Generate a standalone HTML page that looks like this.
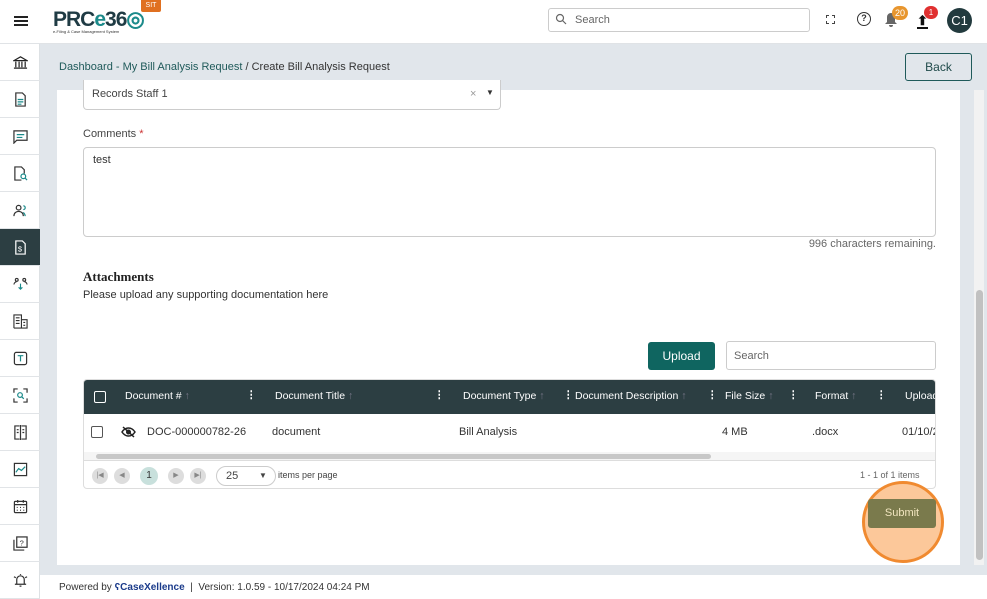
<!DOCTYPE html>
<html><head><style>
*{box-sizing:border-box;margin:0;padding:0}
body{width:987px;height:599px;overflow:hidden;font-family:"Liberation Sans",sans-serif;background:#e1e6eb;position:relative;color:#333}
.abs{position:absolute}
.top{left:0;top:0;width:987px;height:44px;background:#fff;border-bottom:1px solid #e0e3e6}
.side{left:0;top:44px;width:40px;height:555px;background:#fff;border-right:1px solid #dde1e4}
.si{position:absolute;left:0;width:40px;height:37px;border-bottom:1px solid #e1e4e7;display:flex;align-items:center;justify-content:center}
.si svg{width:15px;height:15px}
.card{left:57px;top:90px;width:903px;height:475px;background:#fff}
.cb{width:12px;height:12px;border:1px solid #555;border-radius:2px;display:inline-block}
.hcb{border-color:#fff}
.pg{width:16px;height:16px;border-radius:50%;background:#ddd;position:absolute;top:7px;font-size:7px;color:#888;text-align:center;line-height:16px}
</style></head><body>
<div class="abs top">
  <div class="abs" style="left:14px;top:16px;width:14px;height:2px;background:#222;box-shadow:0 4px 0 #222,0 8px 0 #222"></div>
  <div class="abs" style="left:53px;top:7px;font-size:21px;font-weight:bold;color:#1f3b44;letter-spacing:-1px">PRC<span style="color:#1b8a8a">e</span>36<span style="color:#1b8a8a">◎</span></div>
  <div class="abs" style="left:53px;top:29px;font-size:4px;color:#333">e-Filing &amp; Case Management System</div>
  <div class="abs" style="left:141px;top:0;width:20px;height:12px;background:#e07020;color:#fff;font-size:7px;text-align:center;line-height:12px;border-radius:0 0 2px 2px">SIT</div>
  <div class="abs" style="left:548px;top:8px;width:262px;height:24px;border:1px solid #ccc;border-radius:3px;font-size:11px;color:#666;padding:5px 0 0 26px">Search</div>
  <svg class="abs" style="left:555px;top:13px" width="12" height="12" viewBox="0 0 12 12" fill="none" stroke="#666" stroke-width="1.2"><circle cx="5" cy="5" r="3.5"/><path d="M7.5 7.5L11 11"/></svg>
  <div class="abs" style="left:826px;top:15px;width:9px;height:9px;border:1.5px dashed #444"></div>
  <div class="abs" style="left:857px;top:12px;width:14px;height:14px;border:1.5px solid #333;border-radius:50%;font-size:9px;text-align:center;line-height:11px;font-weight:bold">?</div>
  <svg class="abs" style="left:884px;top:12px" width="14" height="16" viewBox="0 0 14 16" fill="#666"><path d="M7 1a4 4 0 00-4 4v5L1 12h12l-2-2V5a4 4 0 00-4-4zM5 13h4a2 2 0 01-4 0z"/></svg>
  <div class="abs" style="left:892px;top:6px;width:16px;height:14px;background:#e8962e;border-radius:8px;color:#fff;font-size:9px;text-align:center;line-height:14px">20</div>
  <div class="abs" style="left:917px;top:13px;font-size:13px;font-weight:bold;color:#111">⬆</div>
  <div class="abs" style="left:917px;top:27px;width:11px;height:2px;background:#111"></div>
  <div class="abs" style="left:924px;top:6px;width:14px;height:13px;background:#e03030;border-radius:7px;color:#fff;font-size:8px;text-align:center;line-height:13px">1</div>
  <div class="abs" style="left:947px;top:8px;width:25px;height:25px;background:#223a3e;border-radius:50%;color:#fff;font-size:13px;text-align:center;line-height:25px">C1</div>
</div>
<div class="abs side">
  <div class="si" style="top:0"><svg viewBox="0 0 16 16" fill="none" stroke="#222" stroke-width="1.3"><path d="M1 6L8 2l7 4H1zM3 7v6M6.5 7v6M9.5 7v6M13 7v6M1 14h14"/></svg></div>
  <div class="si" style="top:37px"><svg viewBox="0 0 16 16" fill="none" stroke="#333" stroke-width="1.3"><path d="M3 1h7l3 3v11H3z"/><path d="M5 8h6M5 10.5h6M5 13h4" stroke="#1b8a8a"/></svg></div>
  <div class="si" style="top:74px"><svg viewBox="0 0 16 16" fill="none" stroke="#333" stroke-width="1.3"><path d="M1 2h14v10H4l-3 3z"/><path d="M4 6h8M4 9h6" stroke="#1b8a8a"/></svg></div>
  <div class="si" style="top:111px"><svg viewBox="0 0 16 16" fill="none" stroke="#333" stroke-width="1.3"><path d="M9 15H2V1h7l3 3v4"/><circle cx="11" cy="11" r="2.5" stroke="#1b8a8a"/><path d="M13 13l2 2" stroke="#1b8a8a"/></svg></div>
  <div class="si" style="top:148px"><svg viewBox="0 0 16 16" fill="none" stroke="#333" stroke-width="1.3"><circle cx="6" cy="5" r="2.5"/><path d="M1 14c0-3 2-5 5-5s5 2 5 5"/><path d="M11 3a2 2 0 010 4M13 14c0-2-1-3-2-4" stroke="#1b8a8a"/></svg></div>
  <div class="si" style="top:185px;background:#2c3e42"><svg viewBox="0 0 16 16" fill="none" stroke="#fff" stroke-width="1.3"><path d="M3 1h7l3 3v11H3z"/><text x="5.2" y="12.5" font-size="8" fill="#fff" stroke="none" font-family="Liberation Sans">$</text></svg></div>
  <div class="si" style="top:222px"><svg viewBox="0 0 16 16" fill="none" stroke="#333" stroke-width="1.2"><circle cx="4" cy="3" r="1.5"/><circle cx="12" cy="3" r="1.5"/><path d="M1 8c0-2 2-3 3-3M15 8c0-2-2-3-3-3"/><path d="M8 7v6M6 11l2 2 2-2" stroke="#1b8a8a"/></svg></div>
  <div class="si" style="top:259px"><svg viewBox="0 0 16 16" fill="none" stroke="#333" stroke-width="1.2"><path d="M1 15V1h8v14M9 6h6v9H1M3 4h4M3 7h4M3 10h4M11 9h2M11 12h2"/></svg></div>
  <div class="si" style="top:296px"><svg viewBox="0 0 16 16" fill="none" stroke="#333" stroke-width="1.3"><rect x="1.5" y="1.5" width="13" height="13" rx="2"/><path d="M5 5h6M8 5v6" stroke="#1b8a8a"/></svg></div>
  <div class="si" style="top:333px"><svg viewBox="0 0 16 16" fill="none" stroke="#333" stroke-width="1.3"><path d="M1 5V1h4M11 1h4v4M15 11v4h-4M5 15H1v-4"/><circle cx="7.5" cy="7.5" r="2.5" stroke="#1b8a8a"/><path d="M9.5 9.5l2 2" stroke="#1b8a8a"/></svg></div>
  <div class="si" style="top:370px"><svg viewBox="0 0 16 16" fill="none" stroke="#333" stroke-width="1.3"><path d="M7 1H2v14h5M9 1h5v14H9M8 0v16M4 5h2M4 8h2M10 5h2M10 8h2"/></svg></div>
  <div class="si" style="top:407px"><svg viewBox="0 0 16 16" fill="none" stroke="#333" stroke-width="1.3"><rect x="1.5" y="1.5" width="13" height="13"/><path d="M3 11l3-4 3 2 4-4" stroke="#1b8a8a"/></svg></div>
  <div class="si" style="top:444px"><svg viewBox="0 0 16 16" fill="none" stroke="#333" stroke-width="1.3"><rect x="1.5" y="2.5" width="13" height="12" rx="1"/><path d="M1.5 6h13M5 1v3M11 1v3M4 9h1M7.5 9h1M11 9h1M4 12h1M7.5 12h1M11 12h1"/></svg></div>
  <div class="si" style="top:481px"><svg viewBox="0 0 16 16" fill="none" stroke="#333" stroke-width="1.3"><rect x="4" y="1" width="11" height="11"/><path d="M1 4v11h11"/><text x="7" y="10" font-size="8" fill="#333" stroke="none" font-family="Liberation Sans">?</text></svg></div>
  <div class="si" style="top:518px"><svg viewBox="0 0 16 16" fill="none" stroke="#333" stroke-width="1.3"><path d="M4 12V7a4 4 0 018 0v5M2 12h12M7 14h2M1 4l2 1M15 4l-2 1M8 1v1"/></svg></div>
</div>

<div class="abs card"></div>
<div class="abs" style="left:974px;top:90px;width:10px;height:475px;background:#f2f2f2"></div>
<div class="abs" style="left:976px;top:290px;width:7px;height:270px;background:#c1c1c1;border-radius:4px"></div>

<div class="abs" style="left:83px;top:80px;width:418px;height:30px;background:#fff;border:1px solid #ccc;border-top:none;border-radius:0 0 4px 4px"></div>
<div class="abs" style="left:92px;top:88px;font-size:11px;color:#444">Records Staff 1</div>
<div class="abs" style="left:470px;top:88px;font-size:11px;color:#999">×</div>
<div class="abs" style="left:486px;top:88px;font-size:8px">▼</div>

<div class="abs" style="left:59px;top:61px;font-size:11px;color:#1f5a5a">Dashboard - My Bill Analysis Request <span style="color:#333">/ Create Bill Analysis Request</span></div>
<div class="abs" style="left:905px;top:53px;width:67px;height:28px;border:1px solid #1f5a5a;border-radius:3px;font-size:12px;color:#1f4a4a;text-align:center;line-height:26px;background:#e1e6eb">Back</div>

<div class="abs" style="left:83px;top:128px;font-size:11px;color:#444">Comments <span style="color:#c33">*</span></div>
<div class="abs" style="left:83px;top:147px;width:853px;height:90px;border:1px solid #ccc;border-radius:4px;font-size:11px;color:#333;padding:6px 0 0 9px">test</div>
<div class="abs" style="left:780px;top:238px;width:156px;text-align:right;font-size:11px;color:#666">996 characters remaining.</div>
<div class="abs" style="left:83px;top:269px;font-size:13px;font-weight:bold;font-family:'Liberation Serif',serif;color:#222">Attachments</div>
<div class="abs" style="left:83px;top:289px;font-size:11px;color:#333">Please upload any supporting documentation here</div>

<div class="abs" style="left:648px;top:342px;width:67px;height:28px;background:#0f6560;border-radius:3px;color:#fff;font-size:12px;text-align:center;line-height:28px">Upload</div>
<div class="abs" style="left:726px;top:341px;width:210px;height:29px;border:1px solid #ccc;border-radius:3px;font-size:11px;color:#666;padding:8px 0 0 7px">Search</div>

<div class="abs" style="left:83px;top:379px;width:853px;height:110px;border:1px solid #ddd;border-radius:4px;overflow:hidden">
  <div class="abs" style="left:0;top:0;width:853px;height:34px;background:#2c3e42;color:#fff;font-size:10.5px">
    <span class="cb hcb abs" style="left:10px;top:11px"></span>
    <span class="abs" style="left:41px;top:10px">Document # <span style="color:#778">↑</span></span><span class="abs" style="left:162px;top:9px;font-weight:bold">⋮</span>
    <span class="abs" style="left:191px;top:10px">Document Title <span style="color:#778">↑</span></span><span class="abs" style="left:350px;top:9px;font-weight:bold">⋮</span>
    <span class="abs" style="left:379px;top:10px">Document Type <span style="color:#778">↑</span></span><span class="abs" style="left:479px;top:9px;font-weight:bold">⋮</span>
    <span class="abs" style="left:491px;top:10px">Document Description <span style="color:#778">↑</span></span><span class="abs" style="left:623px;top:9px;font-weight:bold">⋮</span>
    <span class="abs" style="left:641px;top:10px">File Size <span style="color:#778">↑</span></span><span class="abs" style="left:704px;top:9px;font-weight:bold">⋮</span>
    <span class="abs" style="left:731px;top:10px">Format <span style="color:#778">↑</span></span><span class="abs" style="left:792px;top:9px;font-weight:bold">⋮</span>
    <span class="abs" style="left:821px;top:10px">Upload</span>
  </div>
  <div class="abs" style="left:0;top:34px;width:853px;height:38px;font-size:11px;color:#333">
    <span class="cb abs" style="left:7px;top:12px"></span>
    <svg class="abs" style="left:37px;top:12px" width="15" height="12" viewBox="0 0 15 12" fill="none" stroke="#222" stroke-width="1.5"><path d="M1 6c2-3 4-4 6.5-4S12 3 14 6c-2 3-4 4-6.5 4S3 9 1 6z"/><circle cx="7.5" cy="6" r="1.8" fill="#222"/><path d="M2 1l11 10"/></svg>
    <span class="abs" style="left:63px;top:12px">DOC-000000782-26</span>
    <span class="abs" style="left:188px;top:12px">document</span>
    <span class="abs" style="left:375px;top:12px">Bill Analysis</span>
    <span class="abs" style="left:638px;top:12px">4 MB</span>
    <span class="abs" style="left:728px;top:12px">.docx</span>
    <span class="abs" style="left:818px;top:12px">01/10/2</span>
  </div>
  <div class="abs" style="left:0;top:72px;width:853px;height:8px;background:#f5f5f5"><div class="abs" style="left:12px;top:2px;width:615px;height:5px;background:#c8c8c8;border-radius:3px"></div></div>
  <div class="abs" style="left:0;top:80px;width:853px;height:30px;border-top:1px solid #ddd;font-size:9px;color:#444">
    <div class="pg" style="left:8px">|◀</div><div class="pg" style="left:30px">◀</div>
    <div class="pg" style="left:56px;width:18px;height:18px;top:6px;background:#c8e0dc;line-height:18px;font-size:10px;color:#333">1</div>
    <div class="pg" style="left:84px">▶</div><div class="pg" style="left:106px">▶|</div>
    <div class="abs" style="left:132px;top:5px;width:60px;height:20px;border:1px solid #ccc;border-radius:10px;font-size:11px;padding:3px 0 0 9px">25<span class="abs" style="left:42px;top:4px;font-size:8px">▼</span></div>
    <span class="abs" style="left:194px;top:9px">items per page</span>
    <span class="abs" style="left:776px;top:9px;color:#666">1 - 1 of 1 items</span>
  </div>
</div>

<div class="abs" style="left:862px;top:481px;width:82px;height:82px;border-radius:50%;background:#fcc89a;border:3px solid #f08a30"></div>
<div class="abs" style="left:868px;top:499px;width:68px;height:29px;background:#7a7a4c;border-radius:3px;color:#f2e6c0;font-size:11px;text-align:center;line-height:29px">Submit</div>

<div class="abs" style="left:40px;top:575px;width:947px;height:24px;background:#fff;font-size:10px;color:#333;padding:7px 0 0 19px">Powered by <b style="color:#1a3a8a">ʕ</b><b style="color:#1a3a8a">CaseXellence</b> &nbsp;| &nbsp;Version: 1.0.59 - 10/17/2024 04:24 PM</div>
</body></html>
